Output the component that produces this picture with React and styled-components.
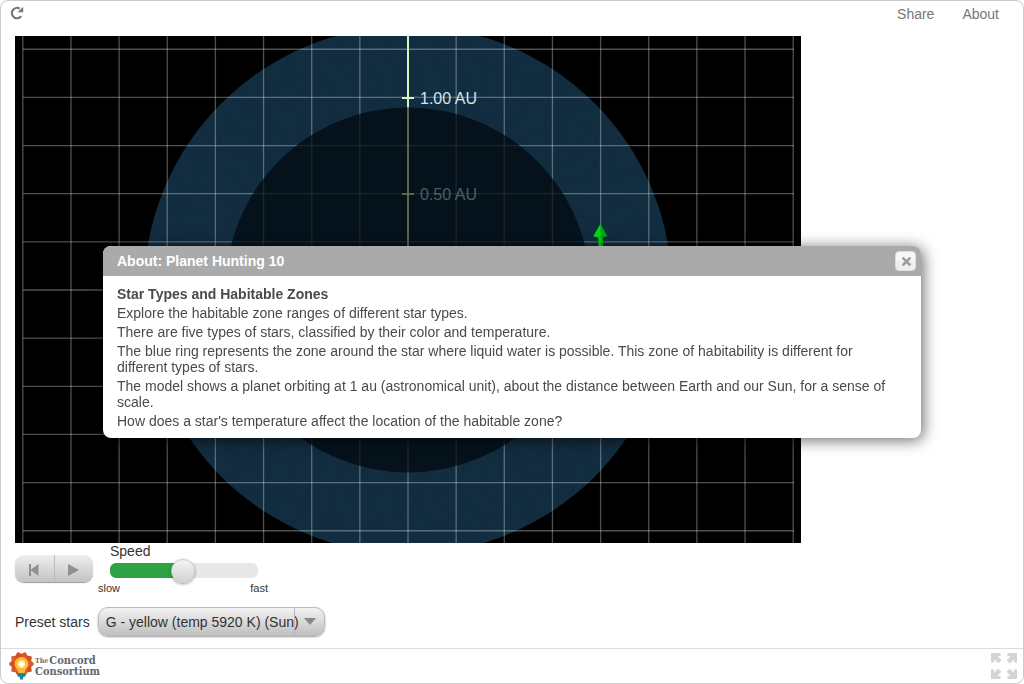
import React, { useState } from "react";
import styled, { createGlobalStyle } from "styled-components";
import { FaTimes } from "react-icons/fa";

const GlobalStyle = createGlobalStyle`
  *, *::before, *::after { box-sizing: border-box; }
  body {
    margin: 0;
    background: #fff;
    color: #333;
    font: 14px/16px "Liberation Sans", Arial, sans-serif;
  }
  h1, h2, p { margin: 0; }
  button, select, input { font: inherit; color: inherit; margin: 0; }
`;

const Frame = styled.div`
  display: flex;
  flex-direction: column;
  min-height: 100vh;
  border: 1px solid #ccc;
  border-radius: 8px;
  overflow: hidden;
`;

const TopBar = styled.header`
  display: flex;
  align-items: flex-start;
  justify-content: space-between;
  height: 35px;
  padding: 5px 24px 0 9px;
`;

const IconButton = styled.button`
  display: flex;
  padding: 0;
  border: 0;
  background: none;
  color: ${(p) => p.$tone};
  cursor: pointer;
`;

const TopLinks = styled.nav`
  display: flex;
  gap: 28px;
`;

const TopLink = styled.a`
  color: #777;
  text-decoration: none;
`;

const Main = styled.main`
  flex: 1;
  padding: 0 14px;
`;

const Scene = styled.svg`
  display: block;
  width: 100%;
  max-width: 786px;
  height: auto;
  background: #000;
`;

const Controls = styled.section`
  display: flex;
  align-items: flex-start;
  gap: 5px;
`;

const Playback = styled.div`
  display: flex;
  width: 78px;
  height: 27px;
  margin-top: 12px;
  border-radius: 9px;
  overflow: hidden;
  background: linear-gradient(#eee, #c2c3c4);
  box-shadow: 0 1px 1px #999;
`;

const PlayButton = styled.button`
  flex: 1;
  display: flex;
  align-items: center;
  justify-content: center;
  padding: 2px 0 0;
  border: 0;
  border-left: ${(p) => (p.$divided ? "1px solid #bbb" : "0")};
  background: none;
  color: #8f9092;
`;

const Speed = styled.div`
  width: 170px;
`;

const SpeedLabel = styled.label`
  display: block;
  padding-left: 12px;
`;

const Slider = styled.input`
  appearance: none;
  display: block;
  width: 148px;
  height: 23px;
  margin: 0 12px;
  background: none;

  &::-webkit-slider-runnable-track {
    height: 15px;
    border-radius: 6px;
    background: linear-gradient(to right, #2da343 ${(p) => p.value}%, #e8e8e8 ${(p) => p.value}%);
  }
  &::-webkit-slider-thumb {
    appearance: none;
    width: 24px;
    height: 24px;
    margin-top: -4px;
    border: 1px solid #ccc;
    border-radius: 50%;
    background: linear-gradient(#f4f4f4, #d2d2d2);
    box-shadow: 0 1px 3px rgba(0, 0, 0, 0.4);
  }
`;

const SpeedEnds = styled.div`
  display: flex;
  justify-content: space-between;
  font-size: 11px;
  line-height: 12px;
`;

const PresetRow = styled.div`
  display: flex;
  align-items: center;
  gap: 8px;
  margin: 13px 0 12px;
`;

const SelectWrap = styled.div`
  position: relative;
  width: 227px;
  height: 29px;
`;

const Select = styled.select`
  appearance: none;
  width: 100%;
  height: 100%;
  padding: 1px 20px 0 7px;
  border: 1px solid #bbb;
  border-radius: 10px;
  background: linear-gradient(#f3f3f3, #c0c0c0);
  box-shadow: 0 1px 2px rgba(0, 0, 0, 0.4);
`;

const SelectArrow = styled.span`
  position: absolute;
  top: 1px;
  right: 1px;
  bottom: 1px;
  display: flex;
  align-items: center;
  justify-content: flex-end;
  width: 30px;
  padding-right: 8px;
  border-left: 1px solid #b5b5b5;
  pointer-events: none;
`;

const Footer = styled.footer`
  display: flex;
  align-items: center;
  justify-content: space-between;
  height: 35px;
  padding: 0 6px 1px 7px;
  border-top: 1px solid #ddd;
`;

const Brand = styled.a`
  display: flex;
  align-items: center;
  color: #66676a;
  text-decoration: none;
`;

const BrandName = styled.span`
  font: 700 11px/11px "DejaVu Serif Condensed", "DejaVu Serif", serif;
`;

const BrandThe = styled.span`
  font-size: 7px;
  line-height: 7px;
  margin-right: 1px;
  vertical-align: 1px;
`;

const Overlay = styled.div`
  position: fixed;
  inset: 0;
  display: flex;
  align-items: center;
  justify-content: center;
`;

const Dialog = styled.section`
  width: 818px;
  max-width: calc(100% - 40px);
  border-radius: 8px;
  overflow: hidden;
  background: #fff;
  color: #4a4a4a;
  box-shadow: 2px 2px 15px rgba(0, 0, 0, 0.6);
`;

const DialogBar = styled.header`
  display: flex;
  align-items: center;
  justify-content: space-between;
  height: 30px;
  padding: 0 5px 0 14px;
  background: #aaa;
`;

const DialogTitle = styled.h1`
  color: #fff;
  font-size: 14px;
  line-height: 16px;
`;

const CloseButton = styled.button`
  display: flex;
  align-items: center;
  justify-content: center;
  width: 21px;
  height: 20px;
  padding: 0 0 0 1px;
  border: 1px solid #ddd;
  border-radius: 4px;
  background: linear-gradient(#f7f7f7 50%, #eee 50%);
  color: #999;
`;

const DialogBody = styled.div`
  display: flex;
  flex-direction: column;
  gap: 3px;
  padding: 10px 20px 9px 14px;
`;

const Heading = styled.h2`
  font-size: 14px;
  line-height: 16px;
`;

const CX = 393;
const CY = 254;
const STEP = 48.15;
const COLS = Array.from({ length: 17 }, (_, i) => CX + (i - 8) * STEP);
const ROWS = Array.from({ length: 11 }, (_, i) => CY + (i - 5) * STEP);
const SPOKES = Array.from({ length: 60 }, (_, i) => (i * Math.PI) / 30);
const at = (r, a) => `${CX + r * Math.cos(a)},${CY + r * Math.sin(a)}`;

function HabitableZone() {
  return (
    <Scene viewBox="0 0 786 507" role="img" aria-label="Habitable zone around the star">
      <circle cx={CX} cy={CY} r="264" fill="#122d40" />
      <g stroke="#0c2232" strokeWidth="1" fill="none" opacity="0.22">
        {SPOKES.map((a) => (
          <polyline key={a} points={`${at(182, a)} ${at(212, a + 0.07)} ${at(240, a)} ${at(264, a + 0.05)}`} />
        ))}
        <circle cx={CX} cy={CY} r="240" strokeDasharray="12 9" />
      </g>
      <g stroke="#fff" strokeOpacity="0.31" strokeWidth="1.3">
        {COLS.map((x) => <line key={x} x1={x} x2={x} y1="0" y2="507" />)}
        {ROWS.map((y) => <line key={y} x1="8" x2="779" y1={y} y2={y} />)}
      </g>
      <circle cx={CX} cy={CY} r="182.500" fill="#00070b" fillOpacity="0.7" />
      <g stroke="#d2f4bd" strokeWidth="2">
        <path d="M393 0v71.500M387 62h12" />
        <path d="M393 71.500V254M387 158h12" stroke="#5d6649" />
      </g>
      <g fill="#cfe3ef" fontFamily="Liberation Sans, Arial, sans-serif" fontSize="16">
        <text x="405" y="68">1.00 AU</text>
        <text x="405" y="164" fillOpacity="0.36">0.50 AU</text>
      </g>
      <rect x="583" y="198" width="5" height="56" fill="#00a814" />
      <rect x="584" y="198" width="2" height="56" fill="#00d820" />
      <path d="M585.500 188l7 12q-7 3-14 0z" fill="#00a010" />
      <path d="M585.500 188l-7 12q4 2 7 1.500z" fill="#00d51c" />
    </Scene>
  );
}

function ReloadIcon() {
  return (
    <svg width="14" height="14" viewBox="0 0 14 14" aria-hidden="true">
      <path d="M11.200 10.300A5.200 5.200 0 1 1 9.800 2.600" fill="none" stroke="currentColor" strokeWidth="2.200" />
      <path d="M13.200 .8v5.400H7.600z" fill="currentColor" />
    </svg>
  );
}

function BulbLogo() {
  const petals = Array.from({ length: 10 }, (_, i) => i * 36 + 18);
  return (
    <svg width="27" height="29" viewBox="0 0 27 29" aria-hidden="true">
      {petals.map((a) => (
        <path key={a} d="M13.500 13L9.800 4.500Q10.500 2.500 13.500 .3Q16.500 2.500 17.200 4.500z" fill={a % 72 === 18 ? "#dc5a28" : "#d14f24"} transform={`rotate(${a} 13.500 13)`} />
      ))}
      <path d="M13.500 6a7 7 0 0 1 7 7c0 4-3.500 5-3.800 9h-6.400c-.3-4-3.800-5-3.800-9a7 7 0 0 1 7-7z" fill="#fdb934" />
      <circle cx="13.500" cy="13" r="4" fill="#fee08a" />
      <path d="M13.500 9l.7 2.700 2.300-1.500-1.500 2.300 2.700.7-2.700.7 1.500 2.300-2.300-1.500-.7 2.700-.7-2.700-2.300 1.500 1.500-2.300-2.700-.7 2.700-.7-1.500-2.300 2.300 1.500z" fill="#fff" />
      <path d="M10 22.500h7v3l-2 1v2h-3v-2l-2-1z" fill="#16879a" />
    </svg>
  );
}

function ExpandIcon() {
  return (
    <svg width="26" height="26" viewBox="0 0 26 26" aria-hidden="true">
      {[0, 90, 180, 270].map((a) => (
        <path key={a} d="M0 0h9.500v3H6.500l4 4.200L7.500 10.200 3 6.500v3H0z" fill="currentColor" transform={`rotate(${a} 13 13)`} />
      ))}
    </svg>
  );
}

export default function App() {
  const [speed, setSpeed] = useState(49);
  const [aboutOpen, setAboutOpen] = useState(true);

  return (
    <>
      <GlobalStyle />
      <Frame>
        <TopBar>
          <IconButton $tone="#777" aria-label="Reload"><ReloadIcon /></IconButton>
          <TopLinks>
            <TopLink href="#share">Share</TopLink>
            <TopLink href="#about" onClick={() => setAboutOpen(true)}>About</TopLink>
          </TopLinks>
        </TopBar>
        <Main>
          <HabitableZone />
          <Controls>
            <Playback>
              <PlayButton aria-label="Reset">
                <svg width="10" height="12" viewBox="0 0 10 12"><path d="M0 0h2v5.500L9.500 0v12L2 6.500V12H0z" fill="currentColor" /></svg>
              </PlayButton>
              <PlayButton $divided aria-label="Play">
                <svg width="11" height="12" viewBox="0 0 11 12"><path d="M0 0l11 6-11 6z" fill="currentColor" /></svg>
              </PlayButton>
            </Playback>
            <Speed>
              <SpeedLabel htmlFor="speed">Speed</SpeedLabel>
              <Slider id="speed" type="range" min="0" max="100" value={speed} onChange={(e) => setSpeed(e.target.value)} />
              <SpeedEnds><span>slow</span><span>fast</span></SpeedEnds>
            </Speed>
          </Controls>
          <PresetRow>
            <label htmlFor="preset">Preset stars</label>
            <SelectWrap>
              <Select id="preset">
                <option>G - yellow (temp 5920 K) (Sun)</option>
              </Select>
              <SelectArrow>
                <svg width="12" height="7" viewBox="0 0 12 7"><path d="M0 0h12L6 7z" fill="#888" /></svg>
              </SelectArrow>
            </SelectWrap>
          </PresetRow>
        </Main>
        <Footer>
          <Brand href="#concord">
            <BulbLogo />
            <BrandName><BrandThe>The</BrandThe>Concord<br />Consortium</BrandName>
          </Brand>
          <IconButton $tone="#d5d5d5" aria-label="Full screen"><ExpandIcon /></IconButton>
        </Footer>
      </Frame>
      {aboutOpen && (
        <Overlay>
          <Dialog role="dialog" aria-labelledby="about-title">
            <DialogBar>
              <DialogTitle id="about-title">About: Planet Hunting 10</DialogTitle>
              <CloseButton aria-label="Close" onClick={() => setAboutOpen(false)}><FaTimes size={13} /></CloseButton>
            </DialogBar>
            <DialogBody>
              <Heading>Star Types and Habitable Zones</Heading>
              <p>Explore the habitable zone ranges of different star types.</p>
              <p>There are five types of stars, classified by their color and temperature.</p>
              <p>The blue ring represents the zone around the star where liquid water is possible. This zone of habitability is different for different types of stars.</p>
              <p>The model shows a planet orbiting at 1 au (astronomical unit), about the distance between Earth and our Sun, for a sense of scale.</p>
              <p>How does a star's temperature affect the location of the habitable zone?</p>
            </DialogBody>
          </Dialog>
        </Overlay>
      )}
    </>
  );
}
